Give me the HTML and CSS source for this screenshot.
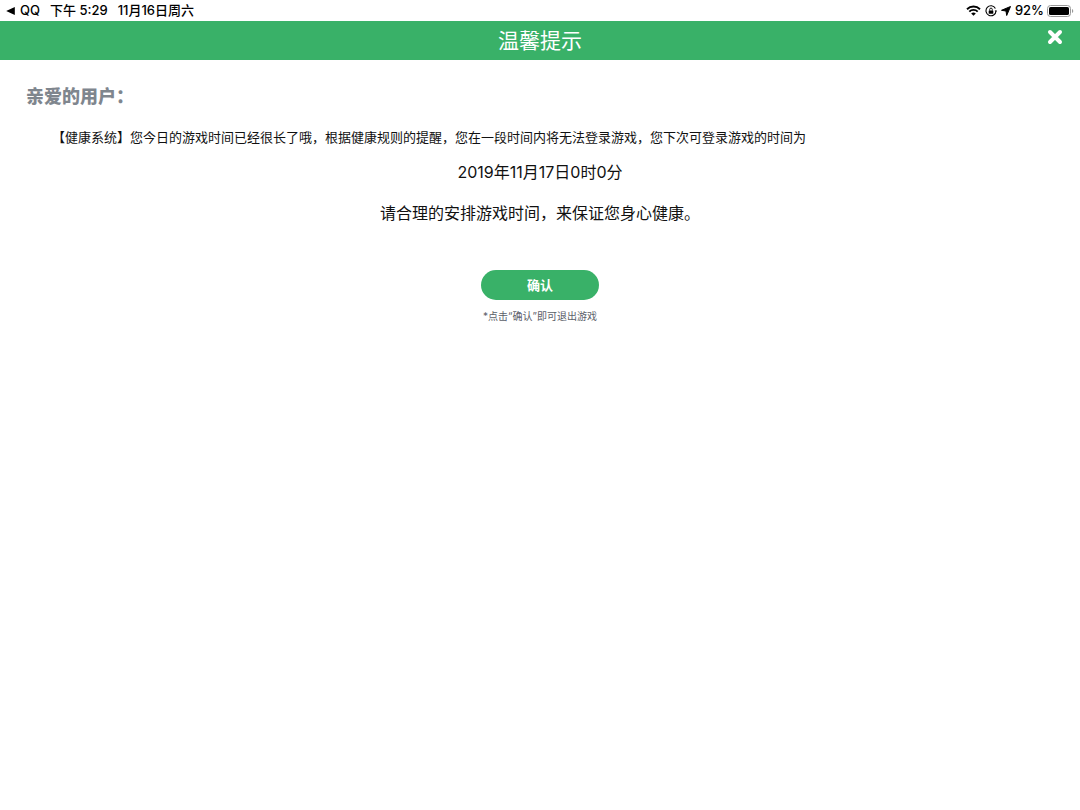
FILE: index.html
```html
<!DOCTYPE html>
<html lang="zh-CN">
<head>
  <meta charset="UTF-8" />
  <meta name="viewport" content="width=device-width, initial-scale=1.0"/>
  <title>温馨提示</title>
  <link rel="stylesheet" href="styles.css">
</head>
<body>

  <!-- Status bar -->
  <div class="status-bar">
    <div class="status-left">
      <a class="back-link" href="#">
        <svg width="9" height="8" viewBox="0 0 9 8"><path d="M8.8 0v8L.2 4z" fill="#000"/></svg>
        <span>QQ</span>
      </a>
      <span>下午 5:29</span>
      <span>11月16日周六</span>
    </div>
    <div class="status-right">
      <svg width="15" height="11" viewBox="0 0 15 11">
        <path d="M1 4.2a9.3 9.3 0 0 1 13 0M3.3 6.6a6 6 0 0 1 8.4 0" fill="none" stroke="#000" stroke-width="1.9"/>
        <path d="M7.5 10.8L5.2 8.5a3.3 3.3 0 0 1 4.6 0z" fill="#000"/>
      </svg>
      <svg class="lock-icon" width="12" height="12" viewBox="0 0 12 12">
        <path d="M10.4 3.4A5 5 0 1 0 11 6" fill="none" stroke="#000" stroke-width="1.1"/>
        <path d="M11.8 5.3L9.7 5.4l1.3 1.9z" fill="#000"/>
        <rect x="3.7" y="5.4" width="4.6" height="3.3" rx=".5" fill="#000"/>
        <path d="M4.7 5.6V4.4a1.3 1.3 0 0 1 2.6 0v1.2" fill="none" stroke="#000" stroke-width=".9"/>
      </svg>
      <svg class="location-icon" width="10" height="10" viewBox="0 0 10 10"><path d="M9.5.5L5.7 9.5 5 5 .5 4.3z" fill="#000" stroke="#000" stroke-width="1" stroke-linejoin="round"/></svg>
      <span>92%</span>
      <svg class="battery-icon" width="27" height="12" viewBox="0 0 27 12">
        <rect x=".5" y=".5" width="23" height="11" rx="3" fill="none" stroke="#999"/>
        <rect x="2" y="2" width="20" height="8" rx="1.6" fill="#000"/>
        <path d="M25 4a2.2 2.2 0 0 1 0 4z" fill="#999"/>
      </svg>
    </div>
  </div>

  <header>
    <h1>温馨提示</h1>
    <button class="close-btn" type="button" aria-label="关闭">
      <svg width="16" height="16" viewBox="0 0 16 16"><path d="M3 3l10 10M13 3L3 13" stroke="#fff" stroke-width="4" stroke-linecap="round"/></svg>
    </button>
  </header>

  <main class="container">
    <h2>亲爱的用户：</h2>
    <p class="message">【健康系统】您今日的游戏时间已经很长了哦，根据健康规则的提醒，您在一段时间内将无法登录游戏，您下次可登录游戏的时间为</p>
    <p class="notice">2019年11月17日0时0分</p>
    <p class="notice">请合理的安排游戏时间，来保证您身心健康。</p>
    <button class="confirm-btn" type="button">确认</button>
    <p class="hint">*点击“确认”即可退出游戏</p>
  </main>

</body>
</html>
```
FILE: styles.css
```css
body {
  font-family: Inter, "Noto Sans CJK SC", sans-serif;
  background-color: #fff;
  color: #111;
  margin: 0;
}

.status-bar {
  display: flex;
  justify-content: space-between;
  align-items: center;
  height: 21px;
  padding: 0 6px;
  font-size: 13px;
  line-height: 21px;
  font-weight: 500;
  color: #000;
}

.status-left,
.status-right,
.back-link {
  display: flex;
  align-items: center;
}

.status-left {
  gap: 10px;
}

.back-link {
  gap: 5px;
  color: #000;
  text-decoration: none;
}

.status-right {
  gap: 4px;
}

.battery-icon {
  margin-left: -1px;
}

header {
  display: grid;
  grid-template-columns: 1fr auto 1fr;
  align-items: center;
  height: 39px;
  padding: 0 17px;
  background-color: #39b168;
  color: #fff;
}

h1 {
  grid-column: 2;
  margin: 0;
  font-size: 21px;
  line-height: 39px;
  font-weight: 400;
}

.close-btn {
  justify-self: end;
  display: flex;
  padding: 0 0 7px;
  border: none;
  background: none;
  cursor: pointer;
}

.container {
  display: flex;
  flex-direction: column;
  align-items: center;
  padding: 23px 26px;
}

h2 {
  align-self: flex-start;
  margin: 0;
  font-size: 18px;
  line-height: 28px;
  font-weight: 900;
  color: #7f868e;
}

.message {
  align-self: flex-start;
  margin: 16px 0 13px;
  padding-left: 26px;
  font-size: 13px;
  line-height: 20px;
}

.notice {
  margin: 0 0 17px;
  font-size: 16px;
  line-height: 24px;
}

.confirm-btn {
  width: 118px;
  height: 30px;
  margin: 28px 0 7px;
  padding: 0 0 2px;
  border: none;
  border-radius: 15px;
  background-color: #39b168;
  color: #fff;
  font-family: inherit;
  font-size: 13px;
  font-weight: 700;
  cursor: pointer;
}

.hint {
  margin: 0;
  font-size: 10px;
  line-height: 18px;
  color: #5b6069;
}
```
